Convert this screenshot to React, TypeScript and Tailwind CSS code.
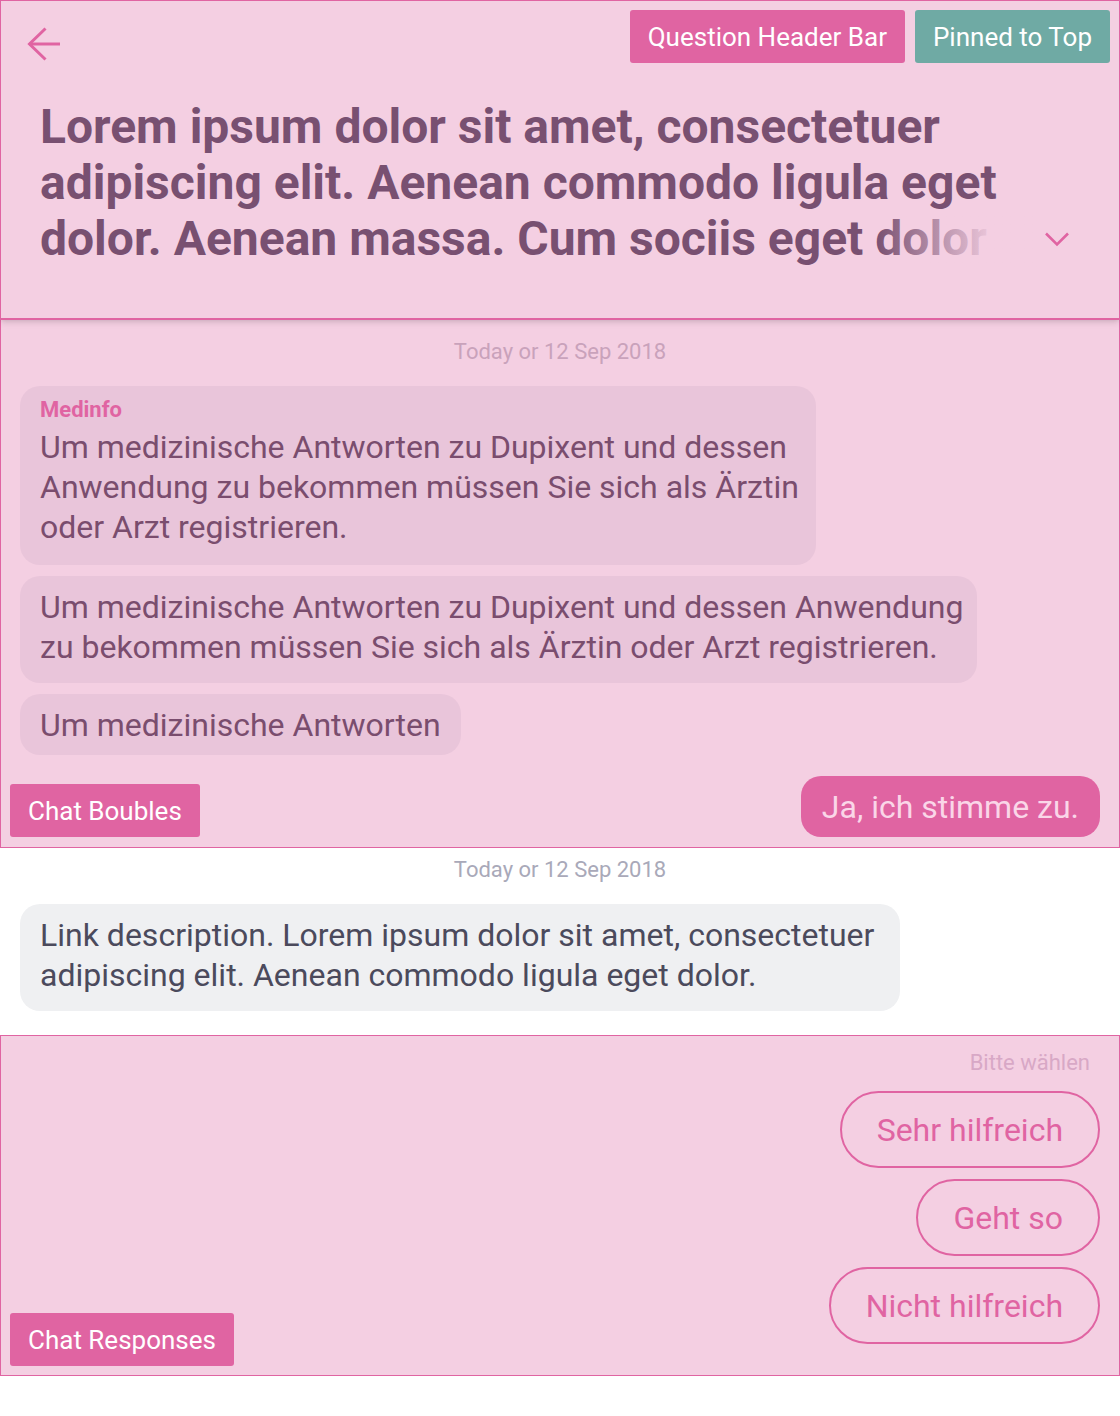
import React from 'react';

const bubbleText = 'text-[32px] leading-[40px] text-[#7a4d6e] whitespace-nowrap';

function Tag({ children, teal }: { children: React.ReactNode; teal?: boolean }) {
  return (
    <div
      className={`h-[53px] px-[18px] flex items-center rounded-[3px] text-[26px] leading-none text-white whitespace-nowrap ${
        teal ? 'bg-[#6faaa4]' : 'bg-[#e064a2]'
      }`}
    >
      {children}
    </div>
  );
}

export default function App() {
  return (
    <div className="w-[1120px] min-h-[1416px] bg-white font-['Roboto',sans-serif]">
      {/* question header bar */}
      <header className="relative z-10 h-[320px] border border-b-2 border-[#e064a2] bg-[#f4cfe2] shadow-md">
        <div className="flex items-start justify-between pl-[25px] pr-[9px] pt-[9px]">
          <svg width="36" height="36" viewBox="0 0 36 36" className="mt-[16px]" fill="none">
            <path d="M34 18H3" stroke="#e064a2" strokeWidth="3" />
            <path d="M19.5 2.5 3.5 18l16 15.5" stroke="#e064a2" strokeWidth="3" />
          </svg>
          <div className="flex gap-[10px]">
            <Tag>Question Header Bar</Tag>
            <Tag teal>Pinned to Top</Tag>
          </div>
        </div>

        <div className="flex items-end pl-[39px] mt-[36px]">
          <div className="relative w-[1000px] h-[168px] overflow-hidden">
            <h1 className="text-[48px] leading-[56px] font-bold text-[#785071]">
              Lorem ipsum dolor sit amet, consectetuer adipiscing elit. Aenean commodo ligula eget dolor. Aenean
              massa. Cum sociis eget dolor natoque penatibus et magnis dis parturient montes.
            </h1>
            <span className="absolute right-0 bottom-0 w-[165px] h-[56px] bg-linear-to-r from-[#f4cfe200] to-[#f4cfe2] to-75%" />
          </div>
          <div className="h-[56px] flex items-center ml-[4px]">
            <svg width="26" height="16" viewBox="0 0 26 16" fill="none">
              <path d="M2 2.5 13 13.5 24 2.5" stroke="#e064a2" strokeWidth="2.6" />
            </svg>
          </div>
        </div>
      </header>

      {/* chat bubbles */}
      <section className="border-x border-b border-[#e064a2] bg-[#f4cfe2]">
        <div className="pt-[19px] text-center text-[22px] leading-[26px] text-[#c9a2bb]">Today or 12 Sep 2018</div>

        <div className="mt-[21px] px-[19px] flex flex-col items-start gap-[11px]">
          <div className="w-[796px] rounded-[20px] bg-[#e9c5da] px-[20px] pt-[12px] pb-[18px]">
            <div className="text-[22px] leading-[24px] font-bold text-[#e064a2]">Medinfo</div>
            <p className={`mt-[5px] ${bubbleText}`}>
              Um medizinische Antworten zu Dupixent und dessen
              <br />
              Anwendung zu bekommen müssen Sie sich als Ärztin
              <br />
              oder Arzt registrieren.
            </p>
          </div>
          <div className="w-[957px] rounded-[20px] bg-[#e9c5da] px-[20px] pt-[11px] pb-[16px]">
            <p className={bubbleText}>
              Um medizinische Antworten zu Dupixent und dessen Anwendung
              <br />
              zu bekommen müssen Sie sich als Ärztin oder Arzt registrieren.
            </p>
          </div>
          <div className="rounded-[20px] bg-[#e9c5da] px-[20px] pt-[11px] pb-[10px]">
            <p className={bubbleText}>Um medizinische Antworten</p>
          </div>
        </div>

        <div className="mt-[21px] pl-[9px] pr-[19px] pb-[10px] flex items-end justify-between">
          <Tag>Chat Boubles</Tag>
          <button className="h-[61px] px-[21px] rounded-[20px] bg-[#e064a2] text-[32px] leading-none text-[#fad6e8]">
            Ja, ich stimme zu.
          </button>
        </div>
      </section>

      {/* link bubble */}
      <section className="pt-[9px] pb-[24px] px-[20px]">
        <div className="text-center text-[22px] leading-[26px] text-[#a9a9b9]">Today or 12 Sep 2018</div>
        <div className="mt-[21px] w-[880px] rounded-[20px] bg-[#eff0f2] px-[20px] pt-[11px] pb-[16px]">
          <p className="text-[32px] leading-[40px] text-[#4b4a5c] whitespace-nowrap">
            Link description. Lorem ipsum dolor sit amet, consectetuer
            <br />
            adipiscing elit. Aenean commodo ligula eget dolor.
          </p>
        </div>
      </section>

      {/* chat responses */}
      <section className="relative border border-[#e064a2] bg-[#f4cfe2] pt-[15px] pb-[31px] pr-[19px] flex flex-col items-end">
        <div className="pr-[10px] text-[22px] leading-[24px] text-[#d8a8c6]">Bitte wählen</div>
        <div className="mt-[16px] flex flex-col items-end gap-[11px]">
          {['Sehr hilfreich', 'Geht so', 'Nicht hilfreich'].map(label => (
            <button
              key={label}
              className="h-[77px] px-[35px] rounded-full border-2 border-[#e064a2] text-[32px] leading-none text-[#e064a2]"
            >
              {label}
            </button>
          ))}
        </div>
        <div className="absolute left-[9px] bottom-[9px]">
          <Tag>Chat Responses</Tag>
        </div>
      </section>
    </div>
  );
}
